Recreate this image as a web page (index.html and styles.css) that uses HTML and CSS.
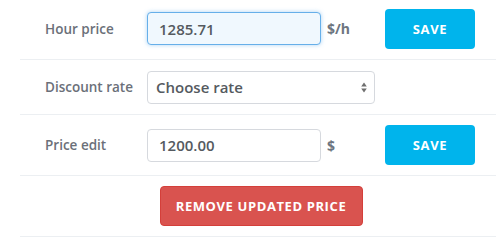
FILE: index.html
```html
<!DOCTYPE html>
<html>
<head>
<meta charset="utf-8">
<link rel="stylesheet" href="styles.css">
</head>
<body>
<div class="form">
  <div class="row row-first">
    <label class="label">Hour price</label>
    <input class="field field-focus" type="text" value="1285.71">
    <span class="unit">$/h</span>
    <button class="btn btn-save">SAVE</button>
  </div>
  <div class="row row-select">
    <label class="label">Discount rate</label>
    <div class="select">
      <span class="select-text">Choose rate</span>
      <svg class="select-arrows" width="6" height="11" viewBox="0 0 6 11"><path d="M3 0.5 L5.8 4.5 H0.2 Z M3 10.5 L5.8 6.5 H0.2 Z" fill="#6f6f6f"/></svg>
    </div>
  </div>
  <div class="row">
    <label class="label">Price edit</label>
    <input class="field" type="text" value="1200.00">
    <span class="unit">$</span>
    <button class="btn btn-save">SAVE</button>
  </div>
  <div class="row">
    <span class="label"></span>
    <div class="center-col">
      <button class="btn btn-remove">REMOVE UPDATED PRICE</button>
    </div>
  </div>
</div>
</body>
</html>
```

FILE: styles.css
```css
html, body {
  margin: 0;
  padding: 0;
  background: #ffffff;
}
body {
  font-family: "Open Sans", "Liberation Sans", sans-serif;
}
.form {
  padding-left: 20px;
}
.row {
  display: flex;
  align-items: center;
  padding-left: 25px;
  border-bottom: 1px solid #eceff2;
  box-sizing: border-box;
  height: 61px;
}
.row-first {
  height: 60px;
  padding-bottom: 2px;
}
.row-select {
  height: 55px;
}
.label {
  width: 102px;
  flex: none;
  font-size: 13.5px;
  font-weight: 600;
  color: #6b7079;
}
.field {
  width: 174px;
  height: 33px;
  box-sizing: border-box;
  border: 1px solid #d6d9de;
  border-radius: 4px;
  padding: 0 11px;
  font-family: inherit;
  font-size: 15px;
  font-weight: 600;
  color: #555a60;
  background: #ffffff;
  outline: none;
}
.field-focus {
  border-color: #66afe9;
  background: #f0f8fe;
  box-shadow: 0 0 4px rgba(102, 175, 233, 0.55);
}
.unit {
  width: 54px;
  flex: none;
  padding-left: 6px;
  box-sizing: border-box;
  font-size: 14px;
  font-weight: 700;
  color: #6d7580;
}
.btn {
  border: none;
  border-radius: 4px;
  font-family: inherit;
  font-weight: 700;
  color: #ffffff;
  cursor: pointer;
  font-size: 13px;
}
.btn-save {
  margin-left: 10px;
  width: 90px;
  height: 40px;
  background: #00b4ec;
  letter-spacing: 0.7px;
}
.select {
  width: 228px;
  height: 33px;
  box-sizing: border-box;
  border: 1px solid #d6d9de;
  border-radius: 4px;
  display: flex;
  align-items: center;
  justify-content: space-between;
  padding: 0 7px 0 8px;
}
.select-text {
  font-size: 15px;
  font-weight: 600;
  color: #555a60;
}
.center-col {
  width: 228px;
  display: flex;
  justify-content: center;
}
.btn-remove {
  width: 203px;
  height: 40px;
  background: #d9534f;
  border: 1px solid #d43f3a;
  letter-spacing: 0.6px;
}
```
